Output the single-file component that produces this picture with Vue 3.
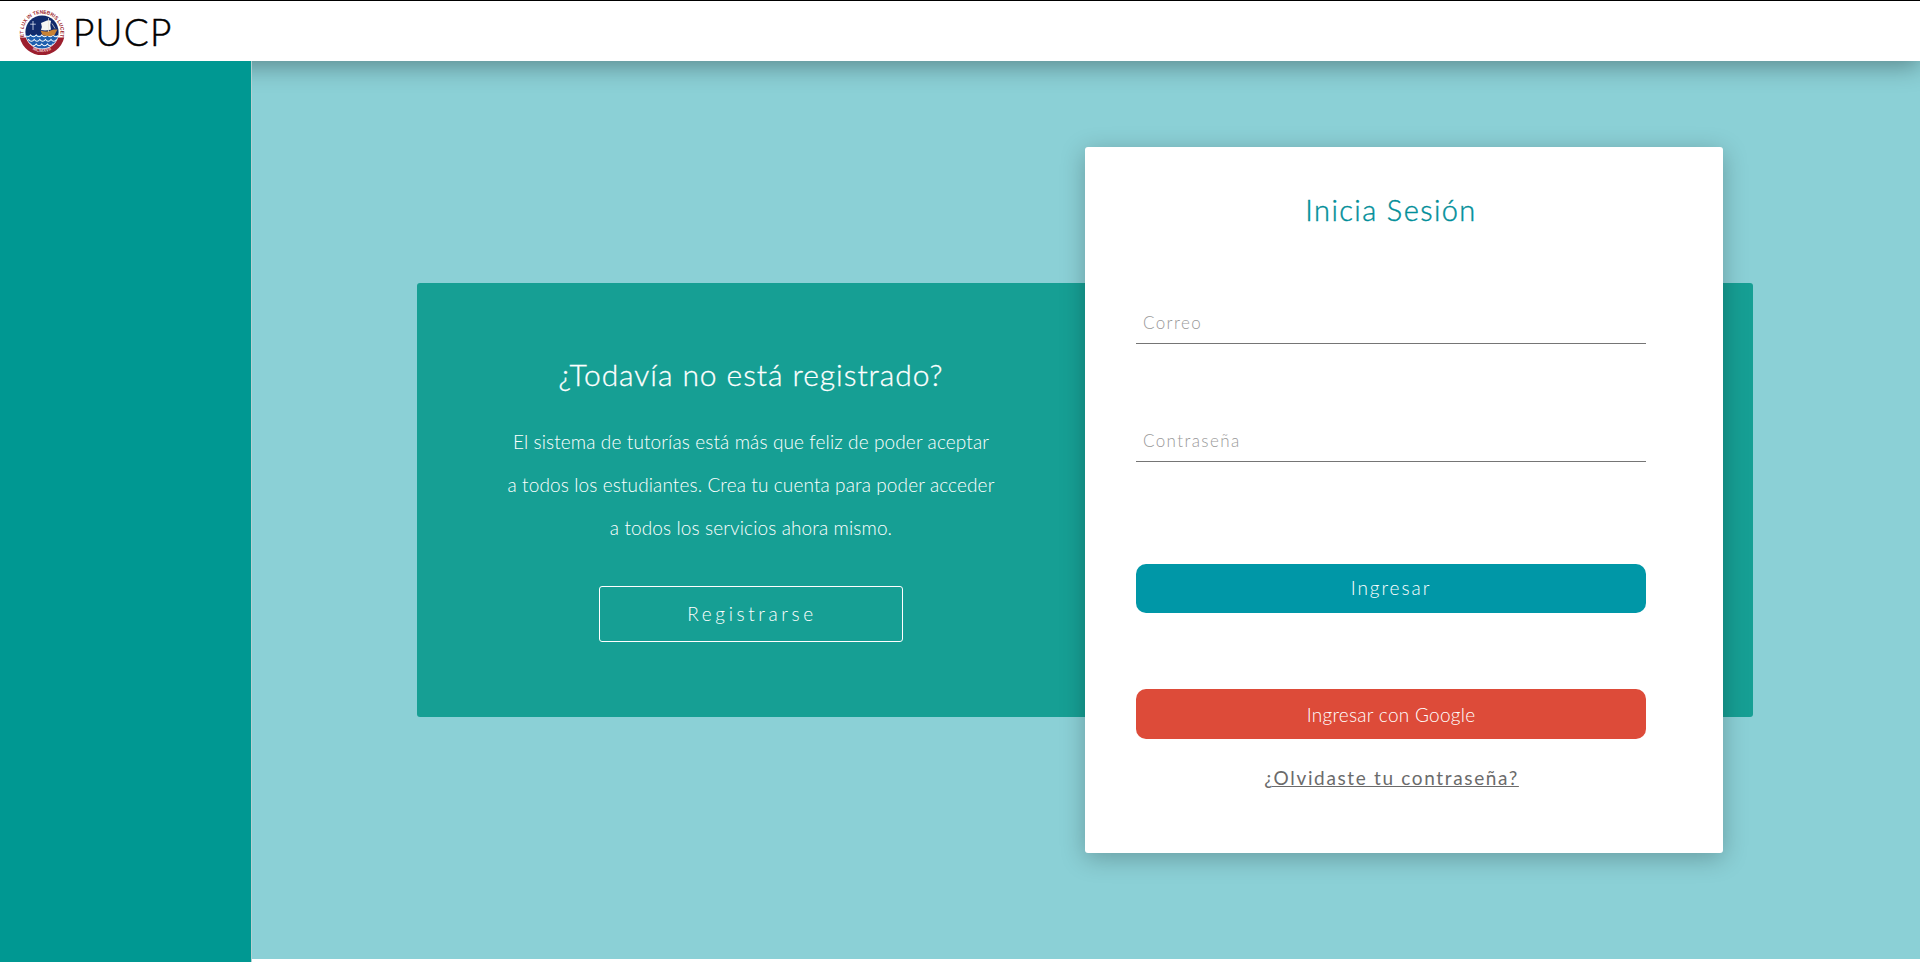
<script setup>
import { ref } from 'vue'

const email = ref('')
const password = ref('')
const lines = [
  'El sistema de tutorías está más que feliz de poder aceptar',
  'a todos los estudiantes. Crea tu cuenta para poder acceder',
  'a todos los servicios ahora mismo.',
]
</script>

<template>
  <div class="page">
    <header class="topbar">
      <svg class="logo" viewBox="0 0 50 50" aria-label="PUCP">
        <defs>
          <path id="motto" d="M7.2 31.7A18.6 18.6 0 1 1 42.8 31.7" />
          <path id="year" d="M8 37.5A21.2 21.2 0 0 0 42 37.5" />
          <clipPath id="disc"><circle cx="25" cy="26" r="16.6" /></clipPath>
        </defs>
        <path d="M2.800 31.500A22.800 22.800 0 0 0 47.200 31.500L41.2 31.500A17 17 0 0 1 8.8 31.500Z" fill="#9c1f2e" />
        <g clip-path="url(#disc)">
          <rect x="8" y="9" width="34" height="21" fill="#112a6b" />
          <rect x="8" y="29" width="34" height="15" fill="#1f5fae" />
          <g fill="none" stroke="#fff" stroke-width="1.1">
            <path d="M8 29q2.800 3.500 5.600 0q2.800 3.500 5.600 0q2.800 3.500 5.600 0q2.800 3.500 5.600 0q2.800 3.500 5.600 0q2.800 3.500 5.600 0" />
            <path d="M6 33.500q2.800 3.500 5.600 0q2.800 3.500 5.600 0q2.800 3.500 5.600 0q2.800 3.500 5.600 0q2.800 3.500 5.600 0q2.800 3.500 5.600 0q2.800 3.500 5.600 0" />
            <path d="M8 38q2.800 3.500 5.600 0q2.800 3.500 5.600 0q2.800 3.500 5.600 0q2.800 3.500 5.600 0q2.800 3.500 5.600 0q2.800 3.500 5.600 0" />
          </g>
          <path d="M16 15v9M13.2 18.2h5.6" stroke="#dfe6f5" stroke-width=".8" />
          <path d="M23.500 24.500q4 1.500 8 .7l5-1.700h4l-3 5.500q-6 2-12 0z" fill="#c98235" />
          <path d="M24 17l6-2.500q3-.8 4 .5q-1.500 4 0 8.500q-5 1.500-10 .5q1.500-3.500 0-7z" fill="#f7f7f3" />
          <path d="M31.500 12v14M35 17.500l3 5" stroke="#e9e2d2" stroke-width=".7" />
        </g>
        <text class="motto"><textPath href="#motto" startOffset="1" textLength="67" lengthAdjust="spacingAndGlyphs">ET LUX IN TENEBRIS LUCET</textPath></text>
        <text class="year"><textPath href="#year" startOffset="50%" text-anchor="middle">MCMXVII</textPath></text>
      </svg>
      <span class="brand">PUCP</span>
    </header>

    <div class="body">
      <aside class="sidebar"></aside>
      <main class="main">
        <div class="stage">
          <section class="panel">
            <div class="signup">
              <h2>¿Todavía no está registrado?</h2>
              <p><span v-for="line in lines" :key="line">{{ line }}</span></p>
              <button class="register">Registrarse</button>
            </div>
          </section>
          <form class="card" @submit.prevent>
            <h1>Inicia Sesión</h1>
            <input v-model="email" type="text" placeholder="Correo" />
            <input v-model="password" type="password" placeholder="Contraseña" />
            <button class="enter">Ingresar</button>
            <button class="google" type="button">Ingresar con Google</button>
            <a>¿Olvidaste tu contraseña?</a>
          </form>
        </div>
      </main>
    </div>
  </div>
</template>

<style>
body {
  margin: 0;
  background: #fff;
  overflow: hidden;
}
</style>

<style scoped>
.page {
  display: flex;
  flex-direction: column;
  width: 1920px;
  height: 962px;
  overflow: hidden;
  background: #fff;
  font-family: Lato, "Liberation Sans", sans-serif;
  font-weight: 300;
}
.page *,
.page {
  box-sizing: border-box;
}
/* the header shadow lies above the content area but below the sidebar */
.topbar {
  position: relative;
  z-index: 1;
  display: flex;
  flex: none;
  height: 61px;
  padding: 5px 0 0 17px;
  border-top: 1px solid #000;
  background: #fff;
  box-shadow: 0 5px 25px rgba(0, 0, 0, 0.35);
}
.logo {
  width: 50px;
  height: 50px;
  overflow: visible;
}
.motto {
  font: 700 5.2px "Liberation Sans", sans-serif;
  fill: #9c1f2e;
}
.year {
  font: 700 4.6px "Liberation Sans", sans-serif;
  fill: #f0c9cd;
}
.brand {
  margin-left: 6px;
  font-size: 37px;
  font-weight: 300;
  line-height: 51px;
  letter-spacing: 1.2px;
  color: #000;
  -webkit-text-stroke: 0.5px #000;
}
.body {
  display: flex;
  flex: 1;
}
.sidebar {
  position: relative;
  z-index: 2;
  flex: none;
  width: 252px;
  border-right: 1px solid #b5cfd0;
  background: #009892;
}
.main {
  flex: 1;
  height: 898px;
  padding: 86px 0 0 165px;
  background: #8bd0d6;
}
.stage {
  display: grid;
  grid-template-columns: 668px 638px 30px;
  grid-template-rows: 706px;
  width: 1336px;
}
.panel {
  grid-area: 1 / 1 / 2 / 4;
  align-self: center;
  height: 434px;
  border-radius: 3px;
  background: #169f94;
}
.signup {
  display: flex;
  flex-direction: column;
  align-items: center;
  width: 668px;
  padding-top: 71px;
  color: #fff;
}
h1,
h2,
p {
  margin: 0;
  font-weight: 300;
  white-space: nowrap;
}
h2 {
  font-size: 30px;
  line-height: 40px;
  letter-spacing: 0.93px;
  -webkit-text-stroke: 0.3px #fff;
}
p {
  display: flex;
  flex-direction: column;
  align-items: center;
  margin-top: 26px;
  font-size: 19px;
  line-height: 43px;
  letter-spacing: 0.12px;
}
button {
  padding: 0;
  border: 0;
  font: 300 19px Lato, "Liberation Sans", sans-serif;
  color: #fff;
}
.register {
  width: 304px;
  height: 56px;
  margin-top: 37px;
  padding: 0 0 1px 2px;
  border: 1px solid #fff;
  border-radius: 3px;
  background: transparent;
  letter-spacing: 3.62px;
}
.card {
  position: relative;
  grid-area: 1 / 2 / 2 / 3;
  display: flex;
  flex-direction: column;
  width: 638px;
  padding: 43px 77px 0 51px;
  border-radius: 3px;
  background: #fff;
  box-shadow: 0 5px 25px rgba(0, 0, 0, 0.25);
}
h1 {
  align-self: center;
  font-size: 29px;
  line-height: 40px;
  letter-spacing: 1.4px;
  color: #008e99;
  -webkit-text-stroke: 0.4px #008e99;
}
input {
  width: 510px;
  height: 43px;
  margin-top: 71px;
  padding: 0 7px;
  border: 0;
  border-bottom: 1px solid #757575;
  outline: 0;
  background: transparent;
  font: 300 17px Lato, "Liberation Sans", sans-serif;
  letter-spacing: 1.4px;
}
input + input {
  margin-top: 75px;
}
input::placeholder {
  color: #999;
  opacity: 1;
}
.enter,
.google {
  border-radius: 10px;
}
.enter {
  height: 49px;
  margin-top: 102px;
  padding-bottom: 2px;
  background: #0097a7;
  letter-spacing: 1.96px;
}
.google {
  height: 50px;
  margin-top: 76px;
  background: #dd4b39;
  letter-spacing: 0.27px;
}
a {
  align-self: center;
  margin-top: 24px;
  padding-left: 1px;
  font-size: 19px;
  font-weight: 400;
  line-height: 30px;
  letter-spacing: 1.65px;
  color: #6b6b6b;
  text-decoration: underline;
  text-decoration-thickness: 1px;
  text-underline-offset: 1px;
}
</style>
